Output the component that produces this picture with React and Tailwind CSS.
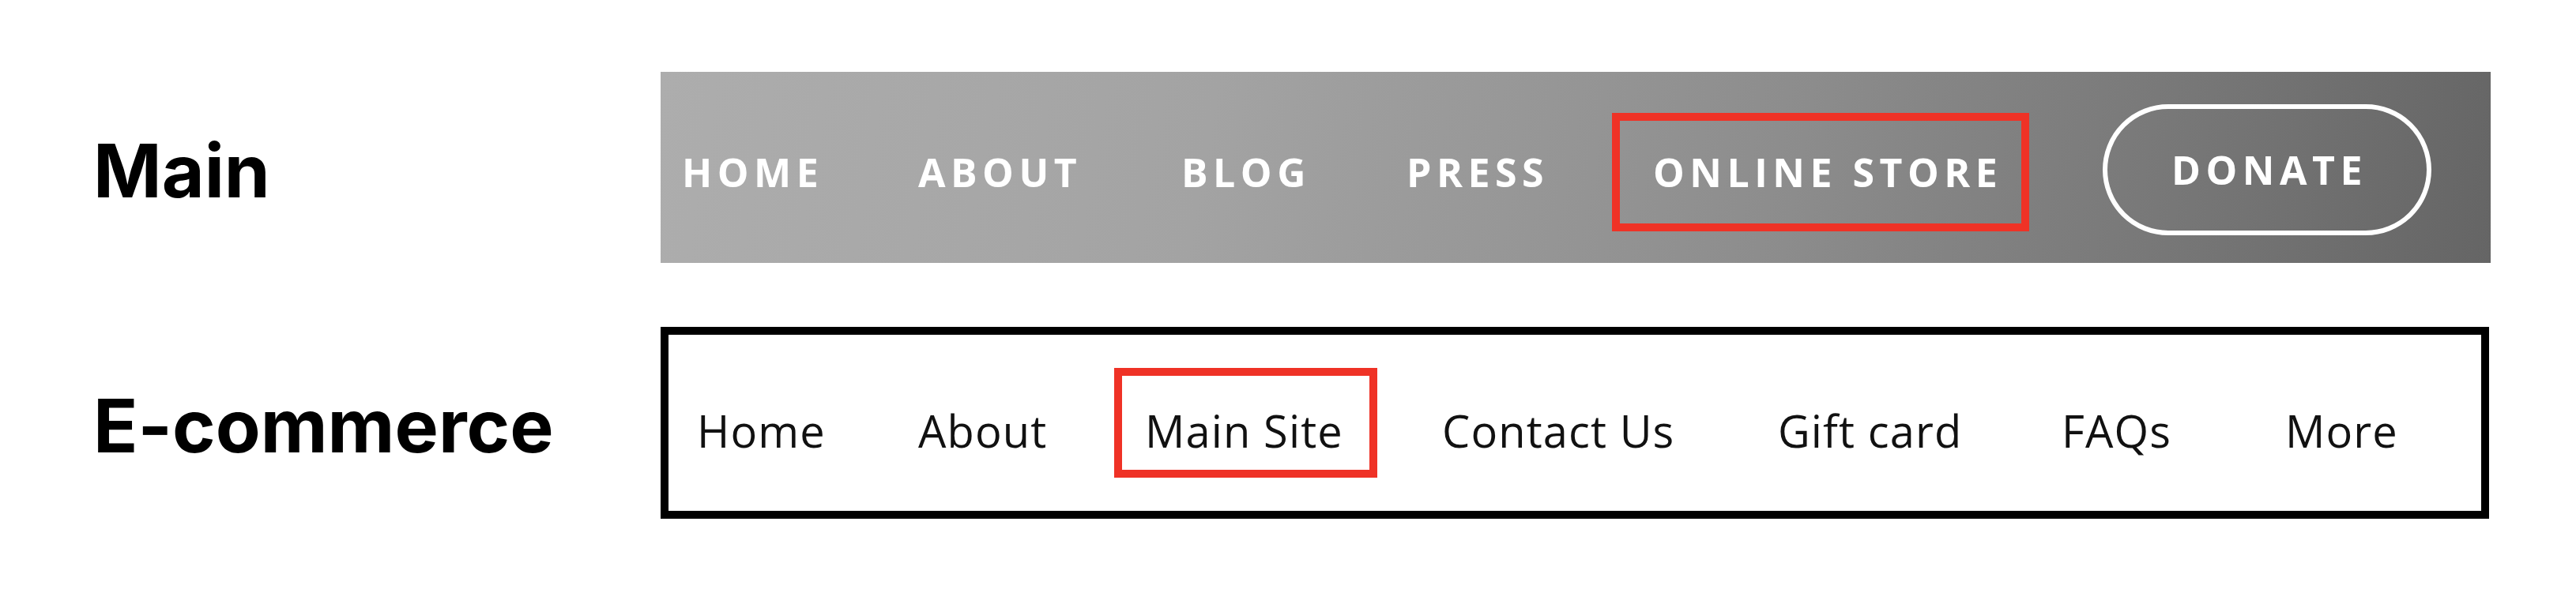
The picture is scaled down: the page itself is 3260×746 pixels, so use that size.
const mainLinks = [
  { label: "HOME", w: "w-[299px]" },
  { label: "ABOUT", w: "w-[333px]" },
  { label: "BLOG", w: "w-[285px]" },
  { label: "PRESS", w: "w-[312px]" },
];

const shopLinks = [
  { label: "Home", w: "w-[280px]" },
  { label: "About", w: "w-[287px]" },
  { label: "Main Site", w: "w-[376px]", marked: true },
  { label: "Contact Us", w: "w-[425px]" },
  { label: "Gift card", w: "w-[359px]" },
  { label: "FAQs", w: "w-[283px]" },
  { label: "More", w: "w-[200px]" },
];

const Label = ({ children }) => (
  <div className="w-[836px] shrink-0 pt-[8px] pl-[118px] font-['Inter',sans-serif] text-[93px] font-bold leading-none text-black">
    {children}
  </div>
);

export default function App() {
  return (
    <div className="flex h-[746px] w-[3260px] flex-col gap-[81px] bg-white pt-[91px]">
      {/* Main site nav */}
      <div className="flex items-center">
        <Label>Main</Label>
        <nav className="flex h-[242px] w-[2316px] items-center bg-[linear-gradient(100deg,#adadad_0%,#a3a3a3_30%,#8c8c8c_62%,#656565_100%)] pt-[12px] pl-[27px] font-['Open_Sans',sans-serif] text-[50px] leading-[50px] font-bold tracking-[0.13em] text-white">
          {mainLinks.map((l) => (
            <span key={l.label} className={`${l.w} shrink-0`}>
              {l.label}
            </span>
          ))}
          <span className="relative w-[569px] shrink-0">
            ONLINE STORE
            <span className="absolute -top-[50px] -left-[52px] h-[150px] w-[528px] border-[10px] border-[#ef3226]" />
          </span>
          <a className="-mt-[6px] flex h-[166px] w-[416px] shrink-0 items-center justify-center rounded-full border-[6px] border-white pl-[6px]">
            DONATE
          </a>
        </nav>
      </div>

      {/* E-commerce nav */}
      <div className="flex items-center">
        <Label>E-commerce</Label>
        <nav className="flex h-[243px] w-[2314px] items-center border-[10px] border-black bg-white pt-[19px] pl-[36px] font-['Open_Sans',sans-serif] text-[56px] leading-[60px] tracking-[0.02em] text-[#111]">
          {shopLinks.map((l) => (
            <span key={l.label} className={`${l.w} relative shrink-0`}>
              {l.label}
              {l.marked && (
                <span className="absolute -top-[49px] -left-[39px] h-[139px] w-[333px] border-[10px] border-[#ef3226]" />
              )}
            </span>
          ))}
        </nav>
      </div>
    </div>
  );
}
